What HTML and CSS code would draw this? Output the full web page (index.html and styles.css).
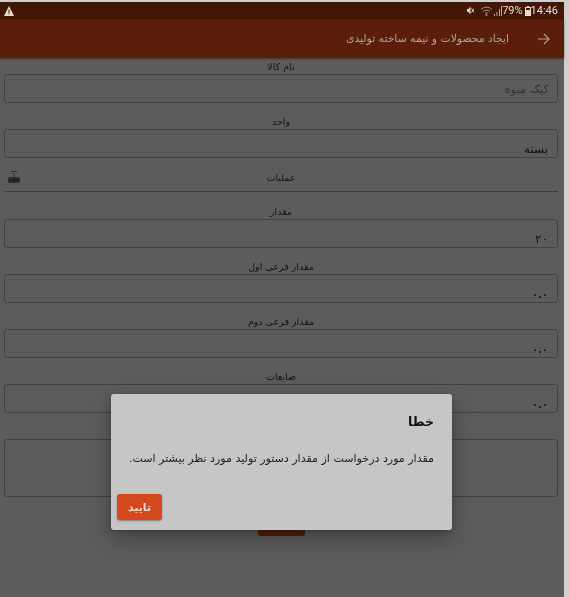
FILE: index.html
```html
<!DOCTYPE html>
<html lang="fa">
<head>
<meta charset="utf-8">
<title>ایجاد محصولات و نیمه ساخته تولیدی</title>
<link rel="stylesheet" href="styles.css">
</head>
<body>
<div class="screen">
  <div class="app">
    <header class="status">
      <svg class="warn" width="10" height="10" viewBox="0 0 10 10"><path d="M5 0L10 10H0z" fill="#e8dcd6"/><path d="M4.500 3.500h1V7h-1zM4.500 7.600h1v1h-1z" fill="#431606"/></svg>
      <div class="status-right">
        <svg class="mute" width="7" height="9" viewBox="0 0 7 9"><path d="M0 3h1.500L3.500.5v8L1.500 6H0z" fill="#e0d4ce"/><path d="M4.500 2.500l2.500 4M7 2.500l-2.500 4" stroke="#e0d4ce" stroke-width="1"/></svg>
        <svg class="wifi" width="13" height="10" viewBox="0 0 13 10"><path d="M1 3.500C4 .5 9 .5 12 3.500M3 5.500C5 3.700 8 3.700 10 5.500M5 7.500C6 6.600 7 6.600 8 7.500" fill="none" stroke="#a8958d" stroke-width="1"/><circle cx="6.500" cy="9" r="1" fill="#a8958d"/></svg>
        <svg class="signal" width="9" height="10" viewBox="0 0 9 10"><path d="M1 8h1v2H1zM3.500 6h1v4h-1zM6 3h1v7H6zM8 0h1v10H8z" fill="#b5a59e"/></svg>
        <span class="pct">79%</span>
        <svg class="batt" width="6" height="10" viewBox="0 0 6 10"><path d="M2 0h2v1h2v9H0V1h2z" fill="#e8dcd6"/><path d="M1 2h4v2H1z" fill="#431606"/></svg>
        <span class="clock">14:46</span>
      </div>
    </header>
    <div class="toolbar">
      <svg class="back" width="12" height="12" viewBox="0 0 12 12"><path d="M0 6h11M6 1l5 5-5 5" fill="none" stroke="#b89f95" stroke-width="1.100"/></svg>
      <h1 class="title">ایجاد محصولات و نیمه ساخته تولیدی</h1>
    </div>
    <main class="form">
      <div class="group">
        <label class="label">نام کالا</label>
        <div class="field center"><span class="placeholder">کیک میوه</span></div>
      </div>
      <div class="group">
        <label class="label">واحد</label>
        <div class="field"><span class="value">بسته</span></div>
      </div>
      <div class="ops">
        <svg class="robot" width="14" height="14" viewBox="0 0 14 14"><path d="M4 1.500h6" stroke="#7e7e7e" stroke-width="1"/><path d="M6.500 3h1v4h-1z" fill="#7e7e7e"/><rect x="1" y="7" width="12" height="6" rx="1.500" fill="#7e7e7e"/><path d="M3 9.500h2v1.500H3zM6 9.500h2v1.500H6zM9 9.500h2v1.500H9z" fill="#3c3c3c"/></svg>
        <span class="ops-label">عملیات</span>
      </div>
      <div class="group">
        <label class="label">مقدار</label>
        <div class="field"><span class="value">۲۰</span></div>
      </div>
      <div class="group">
        <label class="label">مقدار فرعی اول</label>
        <div class="field"><span class="value small">۰.۰</span></div>
      </div>
      <div class="group">
        <label class="label">مقدار فرعی دوم</label>
        <div class="field"><span class="value small">۰.۰</span></div>
      </div>
      <div class="group">
        <label class="label">ضایعات</label>
        <div class="field"><span class="value small">۰.۰</span></div>
      </div>
      <div class="field tall"></div>
      <button class="submit" type="button"></button>
      <div class="scrim"></div>
    </main>
  </div>
  <div class="strip"></div>
  <section class="dialog">
    <h2 class="dialog-title">خطا</h2>
    <p class="dialog-text">مقدار مورد درخواست از مقدار دستور تولید مورد نظر بیشتر است.</p>
    <button class="ok" type="button">تایید</button>
  </section>
</div>
</body>
</html>
```
FILE: styles.css
```css
* { box-sizing: border-box; }
html, body { margin: 0; height: 100%; background: #cfcfcf; }
body { overflow: hidden; font-family: "DejaVu Sans", "Noto Sans", sans-serif; }
.screen { position: relative; width: 569px; height: 597px; display: flex; padding-top: 2px; background: #cfcfcf; }
.app { width: 564px; height: 595px; background: #5c5c5c; display: flex; flex-direction: column; }
.strip { width: 5px; background: #cfcfcf; }

.status { height: 17px; background: #431606; display: flex; align-items: center; justify-content: space-between; padding: 0 6px 0 4px; flex: none; filter: blur(.35px); }
.status-right { display: flex; align-items: center; font-family: Roboto, sans-serif; font-size: 11px; color: #e8dcd6; }
.status svg { display: block; }
.wifi { margin-left: 6px; }
.pct { margin-left: 0; }
.batt { margin-left: 2px; }

.toolbar { height: 39px; flex: none; background: #5a1e0b; display: flex; flex-direction: row-reverse; align-items: center; padding-right: 14px; box-shadow: 0 1px 2px rgba(0, 0, 0, .4); position: relative; z-index: 1; filter: blur(.35px); }
.back { display: block; }
.title { margin: 0 29px 0 0; font-size: 10.800px; font-weight: 400; color: #b89f95; direction: rtl; }

.form { flex: 1; padding: 0 6px 0 4px; display: flex; flex-direction: column; background: #fff; position: relative; filter: blur(.4px); }
.scrim { position: absolute; inset: 0; background: rgba(0, 0, 0, .64); }
.group { height: 55px; display: flex; flex-direction: column; flex: none; }
.label { height: 16px; padding-top: 2px; line-height: 14px; text-align: center; font-size: 9.500px; color: #333; direction: rtl; flex: none; }
.field { height: 29px; flex: none; border: 1px solid #b4b4b4; border-radius: 3px; display: flex; align-items: flex-end; justify-content: flex-end; padding: 0 9px 0; direction: ltr; }
.field.center { align-items: center; padding-right: 8px; }
.placeholder { font-size: 11.500px; color: #8a8a8a; direction: rtl; }
.value { font-size: 12px; color: #333; direction: rtl; line-height: 16px; }
.value.small { font-size: 10px; line-height: 14px; font-weight: 700; color: #444; }
.ops { height: 24px; flex: none; border-bottom: 1.500px solid #a8a8a8; position: relative; display: flex; justify-content: center; align-items: center; padding-bottom: 5px; }
.ops-label { font-size: 9.500px; color: #333; direction: rtl; }
.robot { position: absolute; left: 3px; top: 2px; }
.ops + .group { margin-top: 11px; }
.tall { height: 58px; margin-top: 16px; }
.submit { width: 47px; height: 30px; margin: 9px auto 0; border: 0; border-radius: 2px; background: #f04b14; }

.dialog { position: absolute; left: 111px; top: 394px; width: 341px; height: 136px; background: #c6c6c6; border-radius: 3px; box-shadow: 0 8px 24px rgba(0, 0, 0, .3), 0 2px 6px rgba(0, 0, 0, .2); direction: rtl; padding: 19px 18px 0 6px; filter: blur(.3px); display: flex; flex-direction: column; }
.dialog-title { margin: 0; font-size: 12.500px; line-height: 18px; font-weight: 700; color: #111; }
.dialog-text { margin: 19px 0 0; font-size: 11.050px; line-height: 18px; color: #222; white-space: nowrap; }
.ok { margin-top: 26px; align-self: flex-end; width: 45px; height: 26px; border: 0; border-radius: 3px; background: #d3491b; color: #f3d4c6; font: 700 11px "DejaVu Sans", sans-serif; box-shadow: 0 1px 2px rgba(0, 0, 0, .35); padding: 0; }
```
